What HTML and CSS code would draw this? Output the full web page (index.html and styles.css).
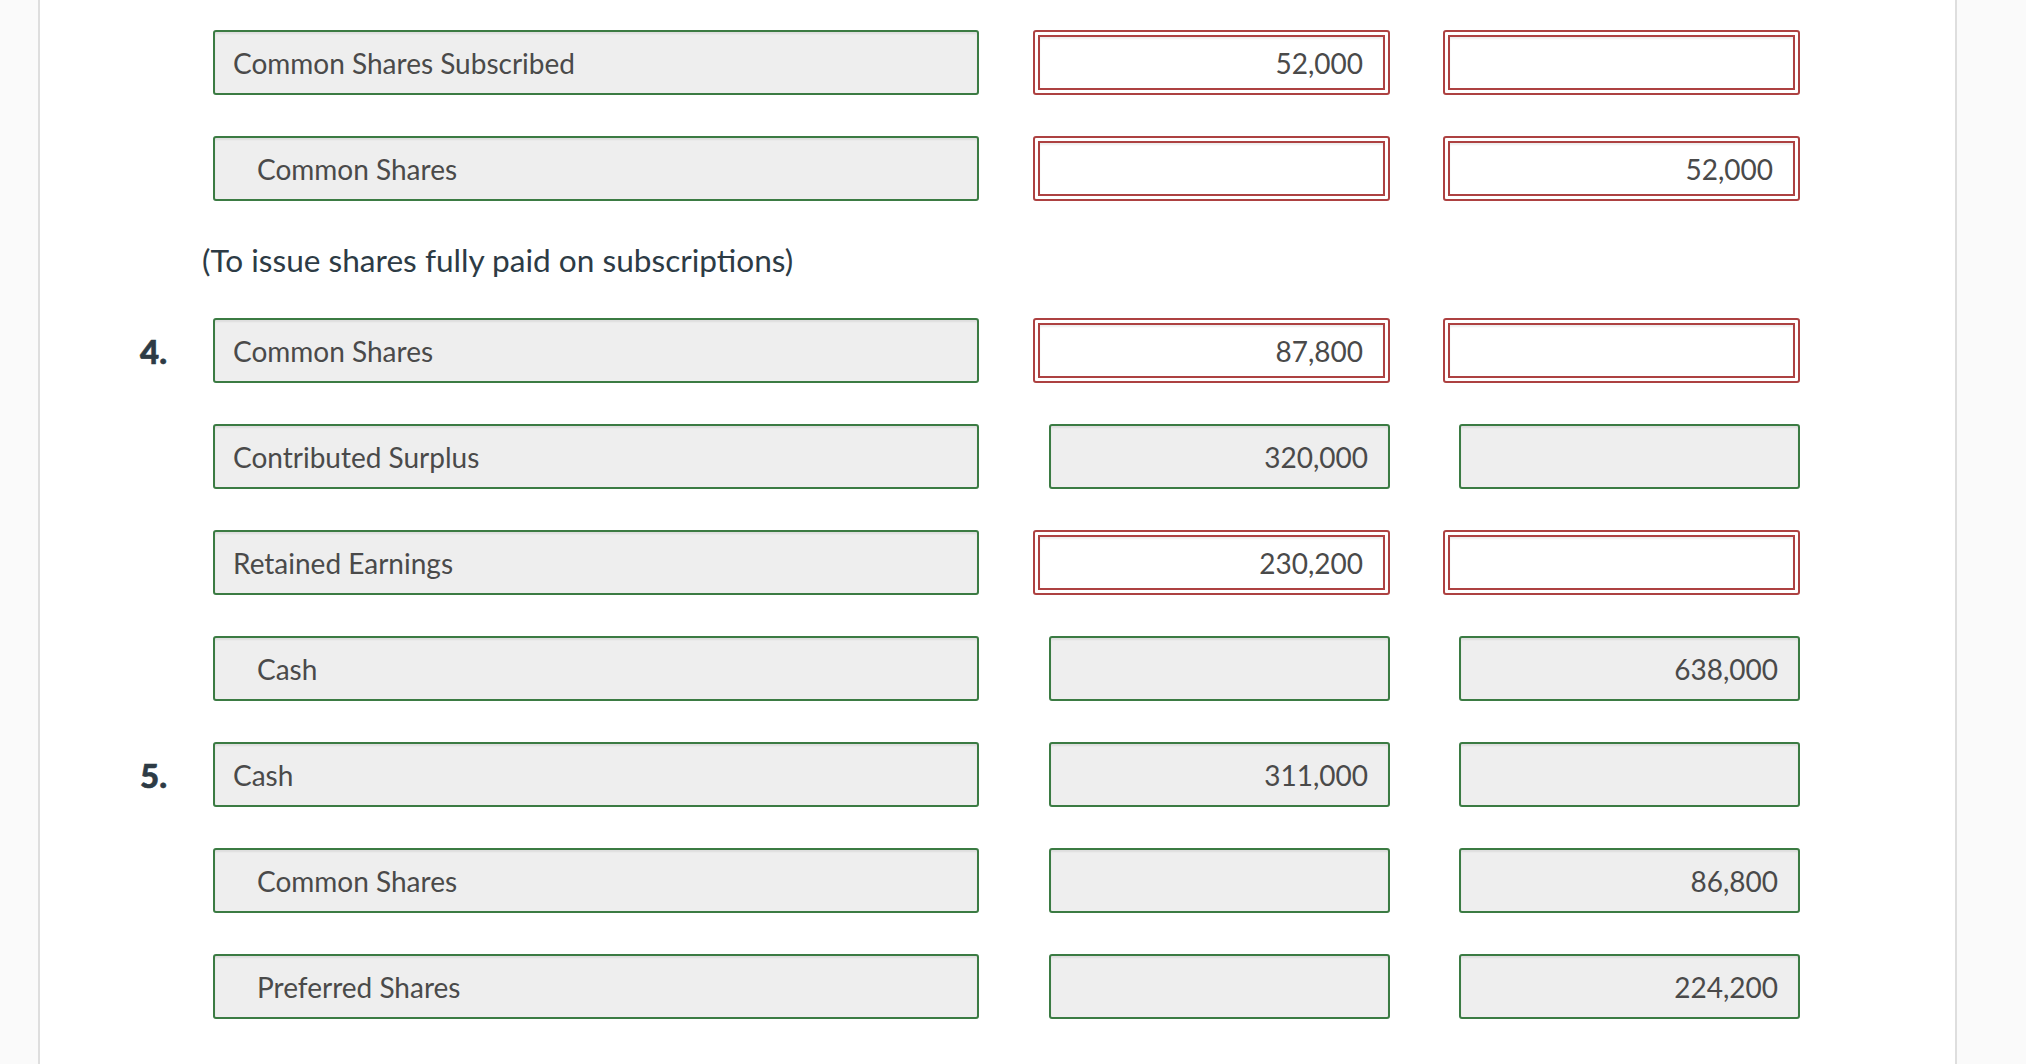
FILE: index.html
```html
<!DOCTYPE html>
<html>
<head>
<meta charset="utf-8">
<link rel="stylesheet" href="styles.css">
</head>
<body>
<div class="page">
  <div class="row">
    <div class="num"></div>
    <div class="acct">Common Shares Subscribed</div>
    <div class="cell c2"><div class="bad"><div class="inp">52,000</div></div></div>
    <div class="cell c3"><div class="bad"><div class="inp"></div></div></div>
  </div>
  <div class="row">
    <div class="num"></div>
    <div class="acct indent">Common Shares</div>
    <div class="cell c2"><div class="bad"><div class="inp"></div></div></div>
    <div class="cell c3"><div class="bad"><div class="inp">52,000</div></div></div>
  </div>
  <div class="note">(To issue shares fully paid on subscriptions)</div>
  <div class="row">
    <div class="num">4.</div>
    <div class="acct">Common Shares</div>
    <div class="cell c2"><div class="bad"><div class="inp">87,800</div></div></div>
    <div class="cell c3"><div class="bad"><div class="inp"></div></div></div>
  </div>
  <div class="row">
    <div class="num"></div>
    <div class="acct">Contributed Surplus</div>
    <div class="cell c2"><div class="ok">320,000</div></div>
    <div class="cell c3"><div class="ok"></div></div>
  </div>
  <div class="row">
    <div class="num"></div>
    <div class="acct">Retained Earnings</div>
    <div class="cell c2"><div class="bad"><div class="inp">230,200</div></div></div>
    <div class="cell c3"><div class="bad"><div class="inp"></div></div></div>
  </div>
  <div class="row">
    <div class="num"></div>
    <div class="acct indent">Cash</div>
    <div class="cell c2"><div class="ok"></div></div>
    <div class="cell c3"><div class="ok">638,000</div></div>
  </div>
  <div class="row">
    <div class="num">5.</div>
    <div class="acct">Cash</div>
    <div class="cell c2"><div class="ok">311,000</div></div>
    <div class="cell c3"><div class="ok"></div></div>
  </div>
  <div class="row">
    <div class="num"></div>
    <div class="acct indent">Common Shares</div>
    <div class="cell c2"><div class="ok"></div></div>
    <div class="cell c3"><div class="ok">86,800</div></div>
  </div>
  <div class="row">
    <div class="num"></div>
    <div class="acct indent">Preferred Shares</div>
    <div class="cell c2"><div class="ok"></div></div>
    <div class="cell c3"><div class="ok">224,200</div></div>
  </div>
</div>
</body>
</html>
```
FILE: styles.css
```css
html, body {
  margin: 0;
  padding: 0;
  background: #fafafa;
  height: 100%;
  overflow: hidden;
}
body {
  font-family: Lato, "Liberation Sans", sans-serif;
}
.page {
  margin-left: 38px;
  width: 1915px;
  min-height: 1064px;
  background: #fff;
  border-left: 2px solid #dedede;
  border-right: 2px solid #dedede;
  padding-top: 30px;
  box-sizing: content-box;
}
.row {
  display: flex;
  align-items: center;
  height: 65px;
  margin-bottom: 41px;
}
.num {
  width: 73px;
  padding-left: 100px;
  font-weight: 900;
  font-size: 33px;
  color: #2d3b45;
  -webkit-text-stroke: 0.6px #2d3b45;
}
.acct {
  width: 766px;
  height: 65px;
  box-sizing: border-box;
  border: 2px solid #3b7b43;
  border-radius: 3px;
  background: #eeeeee;
  box-shadow: inset 0 2px 2px rgba(0,0,0,0.07);
  display: flex;
  align-items: center;
  padding-left: 18px;
  font-size: 28px;
  color: #4a4a4a;
}
.acct.indent {
  padding-left: 42px;
}
.cell {
  display: flex;
  justify-content: flex-end;
}
.c2 {
  margin-left: 54px;
  width: 357px;
}
.c3 {
  margin-left: 53px;
  width: 357px;
}
.ok {
  width: 100%;
  max-width: 341px;
  height: 65px;
  box-sizing: border-box;
  border: 2px solid #3b7b43;
  border-radius: 3px;
  background: #eeeeee;
  box-shadow: inset 0 2px 2px rgba(0,0,0,0.07);
  display: flex;
  align-items: center;
  justify-content: flex-end;
  padding-right: 20px;
  font-size: 28px;
  color: #4a4a4a;
}
.bad {
  width: 100%;
  height: 65px;
  box-sizing: border-box;
  border: 2px solid #ad4141;
  border-radius: 3px;
  background: #fff;
  padding: 3px;
}
.inp {
  height: 100%;
  box-sizing: border-box;
  border: 2px solid #ad4141;
  background: #fff;
  box-shadow: inset 0 2px 2px rgba(0,0,0,0.07);
  display: flex;
  align-items: center;
  justify-content: flex-end;
  padding-right: 20px;
  font-size: 28px;
  color: #4a4a4a;
}
.note {
  margin-top: -1px;
  margin-bottom: 39px;
  padding-left: 162px;
  font-size: 31.6px;
  line-height: 38px;
  color: #2d3b45;
}
```
